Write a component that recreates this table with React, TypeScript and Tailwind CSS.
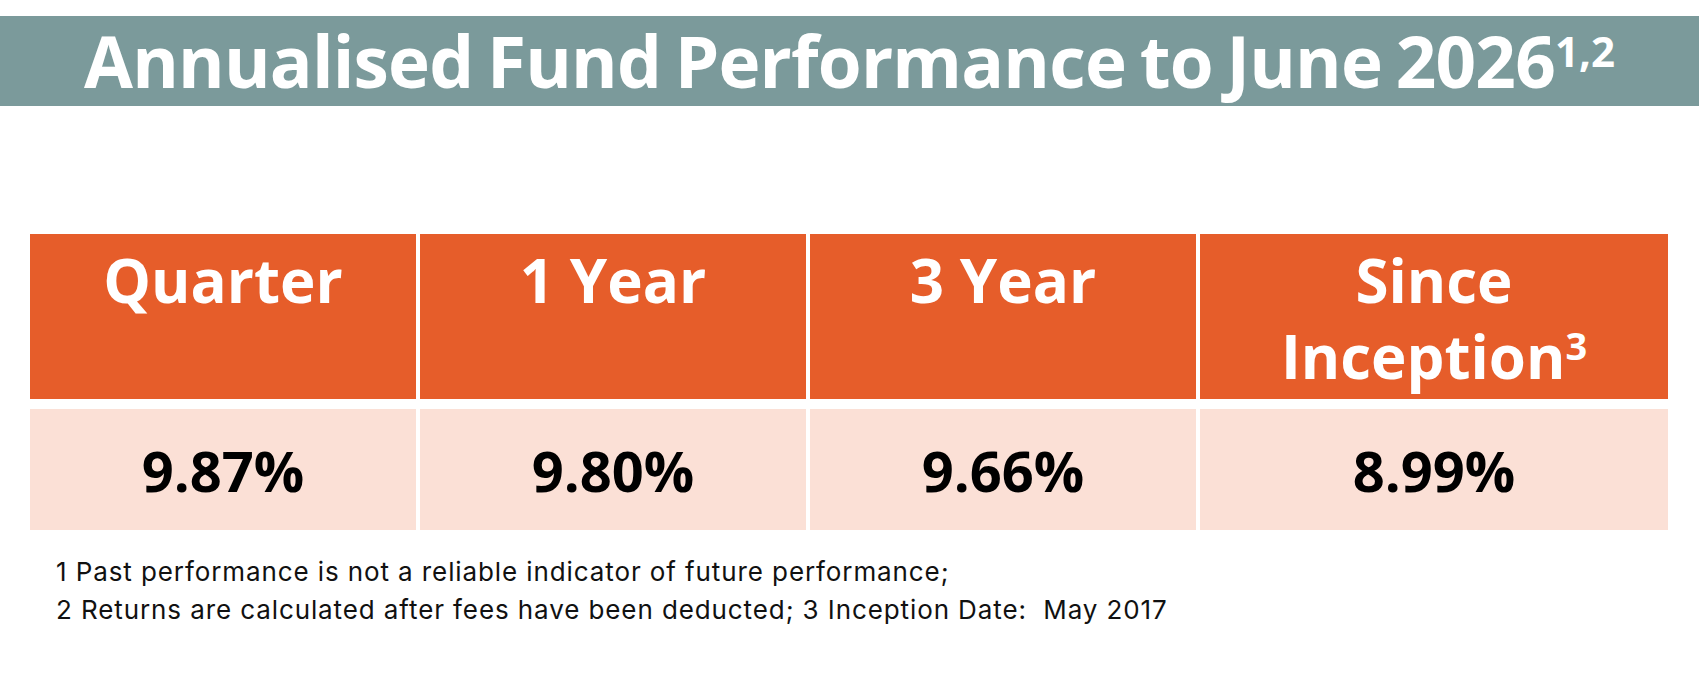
const headers = [
  { label: 'Quarter' },
  { label: '1 Year' },
  { label: '3 Year' },
  { label: 'Since', second: 'Inception', note: '3' },
]

const values = ['9.87%', '9.80%', '9.66%', '8.99%']

export default function App() {
  return (
    <div className="min-h-[682px] w-[1699px] bg-white pt-4">
      {/* Title banner */}
      <div className="flex h-[90px] items-center justify-center bg-[#7b9a9b] pb-[2px]">
        <h1 className="font-['Open_Sans',sans-serif] text-[71px] font-bold leading-none tracking-[-0.8px] text-white [word-spacing:-4px]">
          Annualised Fund Performance to June 2026
          <sup className="text-[42px] tracking-normal">1,2</sup>
        </h1>
      </div>

      {/* Performance table */}
      <div className="mt-[128px] px-[30px]">
        <div className="grid grid-cols-[386px_386px_386px_468px] gap-x-[4px] gap-y-[10px]">
          {headers.map((h) => (
            <div
              key={h.label}
              className="h-[165px] bg-[#e65d2a] pt-[8px] text-center font-['Open_Sans',sans-serif] text-[60px] font-bold leading-[76px] text-white"
            >
              {h.label}
              {h.second && (
                <>
                  <br />
                  {h.second}
                  <sup className="text-[38px]">{h.note}</sup>
                </>
              )}
            </div>
          ))}
          {values.map((v) => (
            <div
              key={v}
              className="flex h-[121px] items-center justify-center bg-[#fbe0d6] font-['Open_Sans',sans-serif] text-[56px] font-bold leading-none text-black"
            >
              {v}
            </div>
          ))}
        </div>
      </div>

      {/* Footnotes */}
      <div className="mt-[23px] pl-[56px] font-['Inter',sans-serif] text-[26px] leading-[38px] tracking-[0.9px] text-[#111]">
        <p>1 Past performance is not a reliable indicator of future performance;</p>
        <p>2 Returns are calculated after fees have been deducted; 3 Inception Date:&nbsp; May 2017</p>
      </div>
    </div>
  )
}
